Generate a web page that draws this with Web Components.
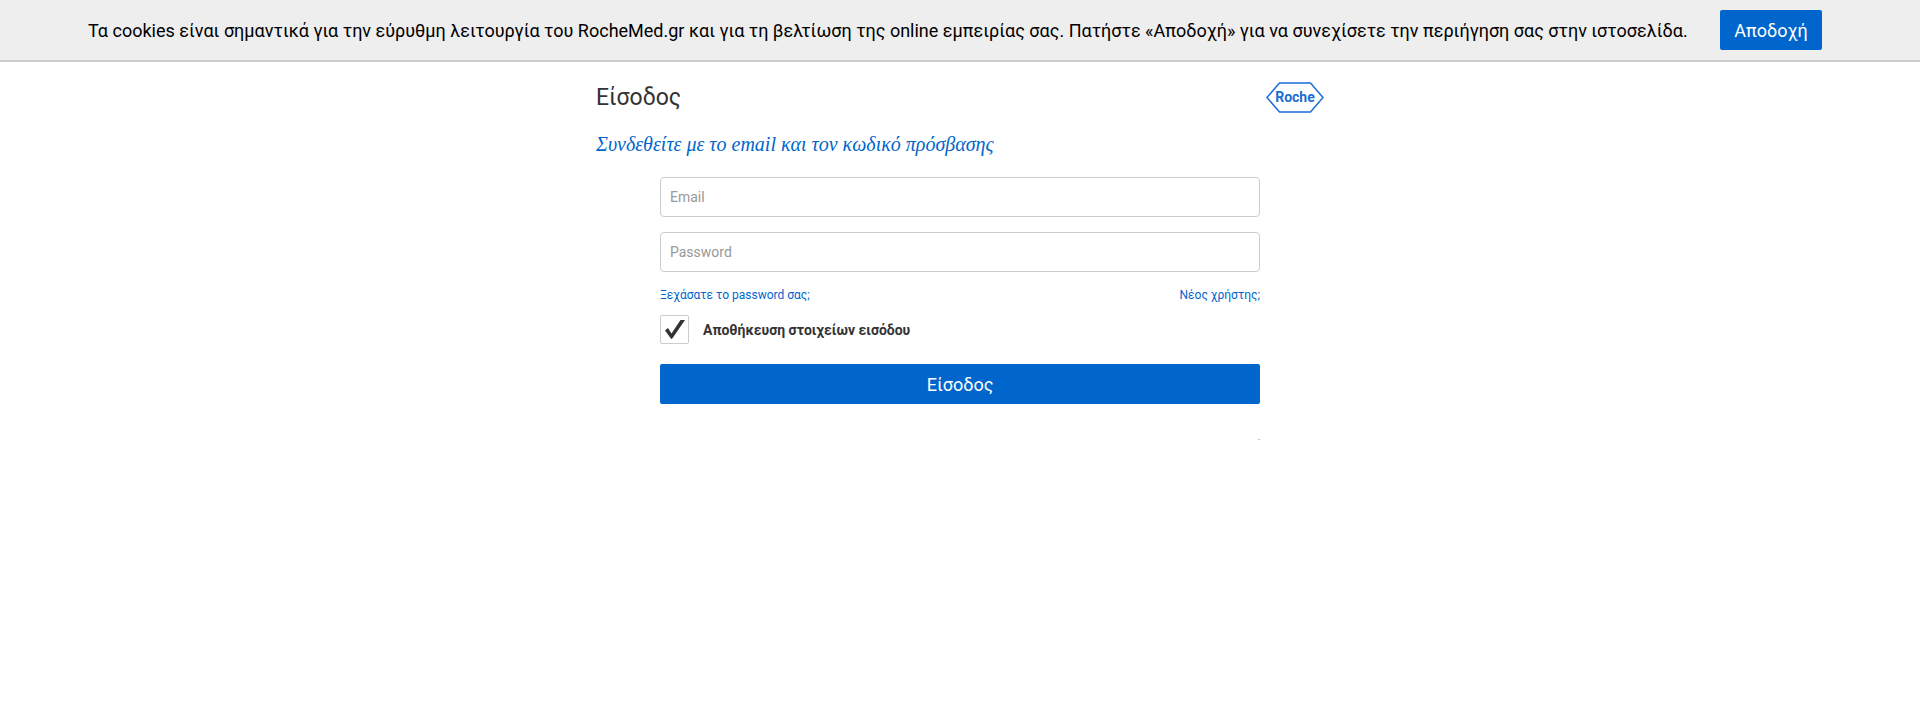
<!DOCTYPE html>
<html lang="el">
<head>
<meta charset="utf-8">
<meta name="viewport" content="width=device-width, initial-scale=1">
<title>Είσοδος - RocheMed.gr</title>
<style>
  body { margin: 0; background: #fff; color: #333; font: 14px/20px Roboto, "Liberation Sans", sans-serif; }
</style>
</head>
<body>
<cookie-bar>Τα cookies είναι σημαντικά για την εύρυθμη λειτουργία του RocheMed.gr και για τη βελτίωση της online εμπειρίας σας. Πατήστε «Αποδοχή» για να συνεχίσετε την περιήγηση σας στην ιστοσελίδα.</cookie-bar>
<login-page>
  <span slot="title">Είσοδος</span>
  <roche-logo slot="logo"></roche-logo>
  <span slot="subtitle">Συνδεθείτε με το email και τον κωδικό πρόσβασης</span>
  <login-form></login-form>
</login-page>

<script>
const define = (name, html, setup) => {
  const template = document.createElement('template');
  template.innerHTML = html;
  customElements.define(name, class extends HTMLElement {
    constructor() {
      super();
      this.attachShadow({ mode: 'open' }).append(template.content.cloneNode(true));
    }
    connectedCallback() { if (setup) setup(this, this.shadowRoot); }
  });
};

define('action-button', `
  <style>
    :host { display: block; }
    button { display: block; box-sizing: border-box; width: 100%; height: 40px; margin: 0; padding: 2px 12px 0;
      border: 0; border-radius: 2px; background: #06c; color: #fff; font: 18px/38px Roboto, sans-serif; cursor: pointer; }
  </style>
  <button type="button"><slot></slot></button>`);

define('cookie-bar', `
  <style>
    :host { display: block; padding: 10px 24px; background: #eee; border-bottom: 2px solid #ccc; color: #000; }
    .row { display: flex; align-items: center; justify-content: space-between; gap: 16px;
      max-width: 1734px; margin: 0 auto; padding-right: 10px; box-sizing: content-box; }
    p { margin: 0; padding-top: 2px; font-size: 18px; line-height: 24px; }
    action-button { flex: none; width: 102px; }
  </style>
  <div class="row"><p><slot></slot></p><action-button>Αποδοχή</action-button></div>`,
  (host, root) => root.querySelector('action-button').addEventListener('click', () => host.remove()));

define('roche-logo', `
  <style>
    :host { display: block; }
    svg { display: block; }
    text { font: bold 14px Roboto, sans-serif; }
  </style>
  <svg width="58" height="31" viewBox="0 0 58 31" role="img" aria-label="Roche">
    <path d="M13.5 1H44.5L57 15.5L44.5 30H13.5L1 15.5Z" fill="none" stroke="#1a6ed8" stroke-width="1.5"/>
    <text x="29" y="20" text-anchor="middle" fill="#1a6ed8">Roche</text>
  </svg>`);

define('login-page', `
  <style>
    :host { display: block; max-width: 728px; margin: 0 auto; padding: 20px 16px; }
    header { display: flex; justify-content: space-between; align-items: center; }
    h1 { margin: 0; font-size: 23px; line-height: 30px; font-weight: 400; }
    h2 { margin: 18px 0 20px; color: #06c; font: italic 20px/26px "Liberation Serif", serif; }
  </style>
  <header><h1><slot name="title"></slot></h1><slot name="logo"></slot></header>
  <h2><slot name="subtitle"></slot></h2>
  <slot></slot>`);

define('text-field', `
  <style>
    :host { display: block; }
    input { display: block; box-sizing: border-box; width: 100%; height: 40px; margin: 0; padding: 0 9px;
      border: 1px solid #ccc; border-radius: 4px; background: #fff; color: #333; font: 14px/20px Roboto, sans-serif; }
    input::placeholder { color: #999; opacity: 1; }
  </style>
  <input>`,
  (host, root) => {
    const input = root.querySelector('input');
    input.type = host.getAttribute('type');
    input.placeholder = host.getAttribute('label');
    input.setAttribute('aria-label', host.getAttribute('label'));
  });

define('check-field', `
  <style>
    :host { display: block; }
    label { display: flex; align-items: center; gap: 14px; font-size: 14px; line-height: 20px; font-weight: 700; }
    .box { display: grid; width: 29px; height: 29px; }
    input, svg { grid-area: 1 / 1; }
    input { appearance: none; box-sizing: border-box; width: 100%; height: 100%; margin: 0;
      border: 1px solid #ccc; border-radius: 2px; background: #fff; }
    svg { place-self: center; pointer-events: none; visibility: hidden; }
    input:checked + svg { visibility: visible; }
  </style>
  <label>
    <span class="box"><input type="checkbox" checked>
      <svg width="29" height="29" viewBox="0 0 29 29"><path d="M5 15.5L8 13L11.5 18.5L20.5 5H25L13 22.5Q11.5 25 10.5 23Z" fill="#333"/></svg>
    </span>
    <slot></slot>
  </label>`);

define('login-form', `
  <style>
    :host { display: block; max-width: 600px; margin: 0 auto; }
    form { display: grid; }
    text-field { margin-bottom: 15px; }
    .links { display: flex; justify-content: space-between; font-size: 12px; line-height: 16px; margin-bottom: 12px; }
    a { color: #06c; text-decoration: none; }
    check-field { margin-bottom: 20px; }
    .note { margin: 28px 0 0; text-align: right; font-size: 8px; line-height: 12px; }
  </style>
  <form>
    <text-field type="email" label="Email"></text-field>
    <text-field type="password" label="Password"></text-field>
    <div class="links"><a href="#forgot">Ξεχάσατε το password σας;</a><a href="#register">Νέος χρήστης;</a></div>
    <check-field>Αποθήκευση στοιχείων εισόδου</check-field>
    <action-button>Είσοδος</action-button>
    <p class="note">.</p>
  </form>`);
</script>
</body>
</html>
